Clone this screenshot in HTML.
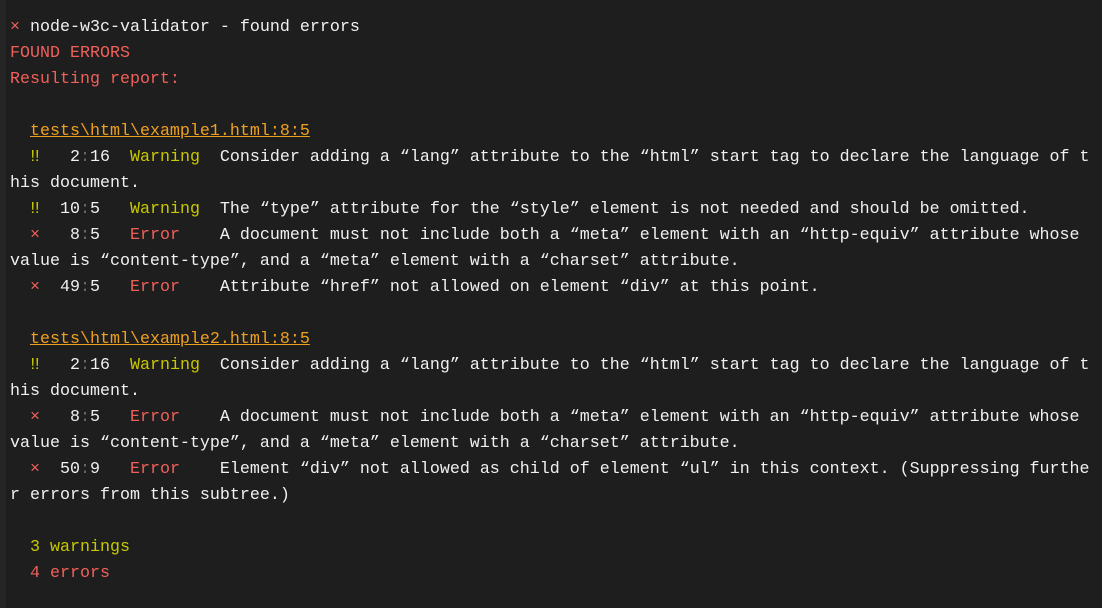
<!DOCTYPE html>
<html><head><meta charset="utf-8"><style>
html,body{margin:0;padding:0;background:#1e1e1e;width:1102px;height:608px;overflow:hidden}
body{border-left:6px solid #252526;box-sizing:border-box}
pre{margin:0;padding:15px 0 0 4px;font-family:"Liberation Mono",monospace;font-size:16.67px;line-height:26px;color:#f0f0f0;white-space:pre}
.r{color:#f0605a}.y{color:#c8c800}.o{color:#f0a020;text-decoration:underline}.d{color:#6a6a6a}
</style></head><body><pre><span class="r">×</span> node-w3c-validator - found errors
<span class="r">FOUND ERRORS</span>
<span class="r">Resulting report:</span>

  <span class="o">tests\html\example1.html:8:5</span>
  <span class="y">‼</span>   2<span class="d">:</span>16  <span class="y">Warning</span>  Consider adding a “lang” attribute to the “html” start tag to declare the language of t
his document.
  <span class="y">‼</span>  10<span class="d">:</span>5   <span class="y">Warning</span>  The “type” attribute for the “style” element is not needed and should be omitted.
  <span class="r">×</span>   8<span class="d">:</span>5   <span class="r">Error</span>    A document must not include both a “meta” element with an “http-equiv” attribute whose
value is “content-type”, and a “meta” element with a “charset” attribute.
  <span class="r">×</span>  49<span class="d">:</span>5   <span class="r">Error</span>    Attribute “href” not allowed on element “div” at this point.

  <span class="o">tests\html\example2.html:8:5</span>
  <span class="y">‼</span>   2<span class="d">:</span>16  <span class="y">Warning</span>  Consider adding a “lang” attribute to the “html” start tag to declare the language of t
his document.
  <span class="r">×</span>   8<span class="d">:</span>5   <span class="r">Error</span>    A document must not include both a “meta” element with an “http-equiv” attribute whose
value is “content-type”, and a “meta” element with a “charset” attribute.
  <span class="r">×</span>  50<span class="d">:</span>9   <span class="r">Error</span>    Element “div” not allowed as child of element “ul” in this context. (Suppressing furthe
r errors from this subtree.)

  <span class="y">3 warnings</span>
  <span class="r">4 errors</span>
</pre></body></html>
